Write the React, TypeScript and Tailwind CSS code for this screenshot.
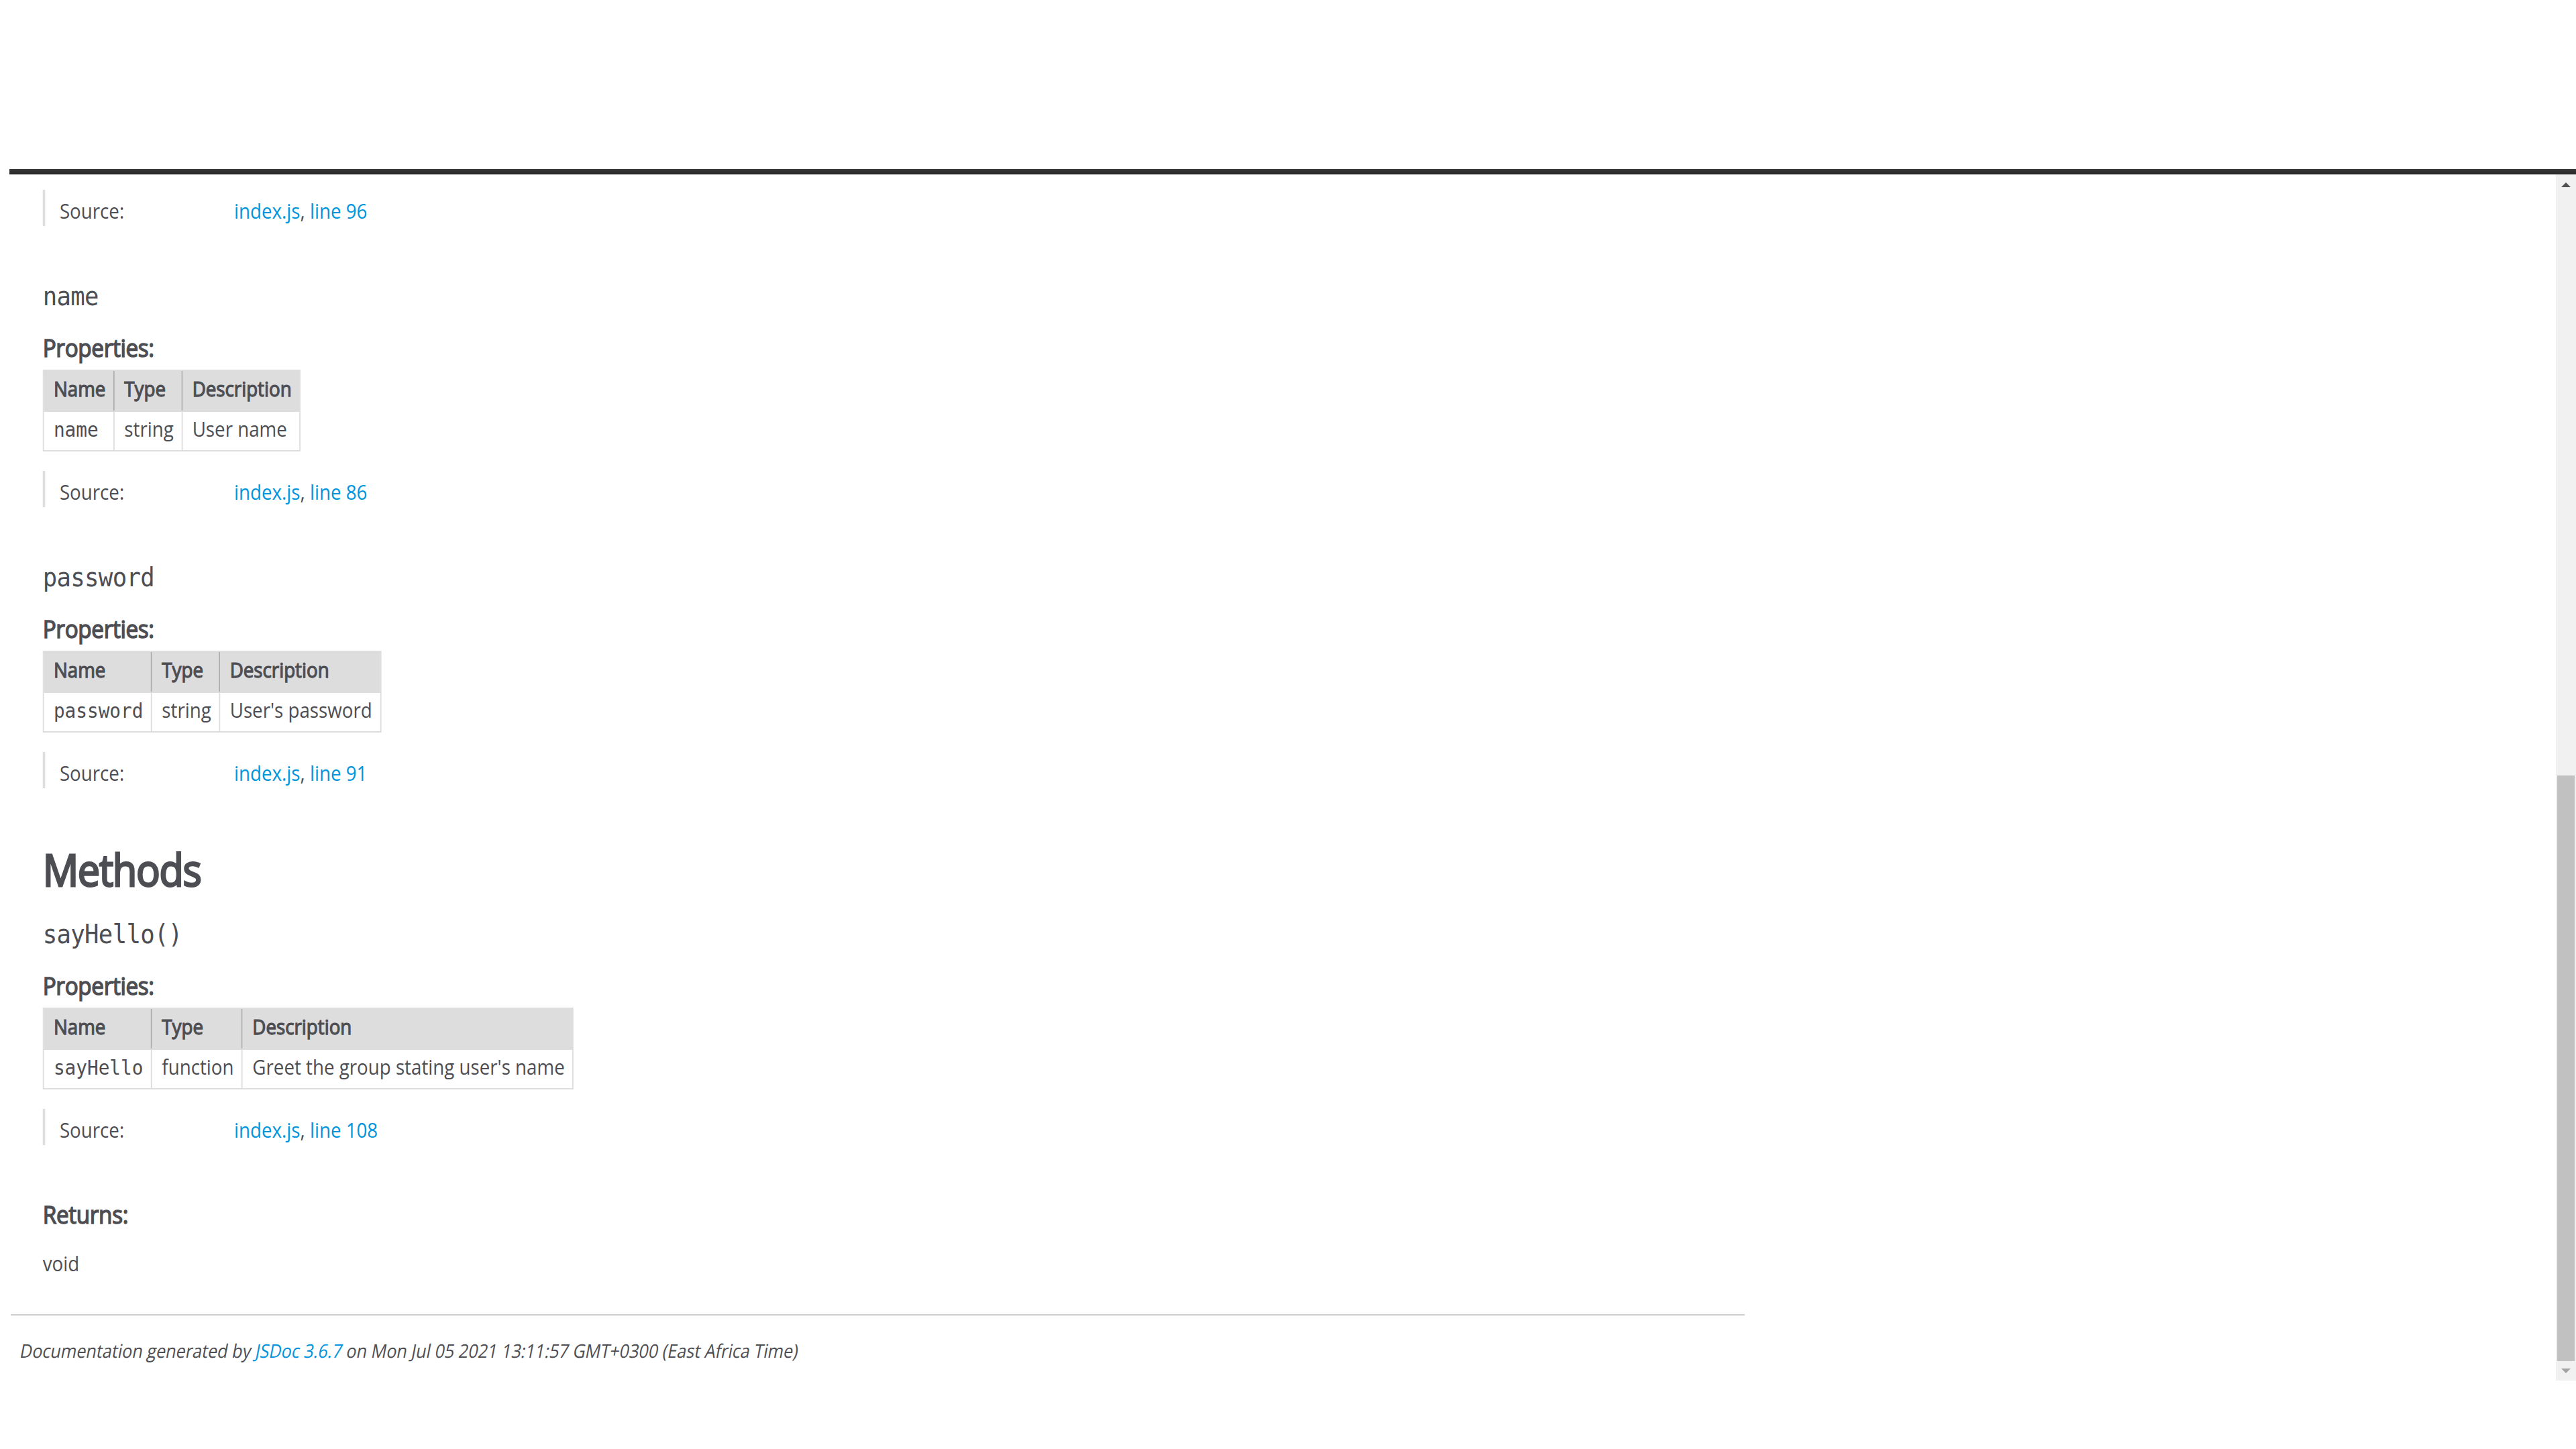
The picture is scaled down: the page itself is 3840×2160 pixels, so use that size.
import React from 'react';

// The capture is 2.2x with a 0.9 horizontal squeeze, so the page body is
// laid out at its natural size and narrowed with scale-x-90.
// The doc theme only ships Open Sans Regular: bold and italic are synthesized.

function SourceLine({ line }: { line: string }) {
  return (
    <div className="mt-[29px] flex w-full border-l-[4.4px] border-[#ddd] pt-[10px] pb-[2px] text-[30.8px] leading-[42px] first:mt-0">
      <span className="w-[313px] shrink-0 pl-[24px]">Source:</span>
      <span>
        <a className="text-[#0095dd]">index.js</a>, <a className="text-[#0095dd]">line {line}</a>
      </span>
    </div>
  );
}

function MemberName({ children, className = 'mt-[80px]' }: { children: React.ReactNode; className?: string }) {
  return (
    <h4 className={`${className} font-['DejaVu_Sans_Mono',monospace] text-[39.6px] leading-[48px] tracking-[-0.73px] font-normal`}>
      {children}
    </h4>
  );
}

function SubTitle({ children, className = 'mt-[31px]' }: { children: React.ReactNode; className?: string }) {
  return (
    <h5 className={`${className} text-[36.96px] leading-[44px] font-normal tracking-[-0.37px] [-webkit-text-stroke:1.5px_#4d4e53]`}>
      {children}
    </h5>
  );
}

function PropsTable({ name, type, desc }: { name: string; type: string; desc: string }) {
  const head = 'bg-[#ddd] [-webkit-text-stroke:1.25px_#4d4e53] pt-[5px] pb-[12px] pl-[16px] pr-[13px]';
  const cell = 'border-t-2 border-[#ddd] pt-[4px] pb-[10px] pl-[16px] pr-[13px]';
  return (
    <div className="mt-[11px] inline-grid grid-cols-[repeat(3,auto)] border-2 border-[#ddd] text-[30.8px] leading-[42px]">
      <div className={`${head} border-r-2 border-r-[#aaa]`}>Name</div>
      <div className={`${head} border-r-2 border-r-[#aaa]`}>Type</div>
      <div className={head}>Description</div>
      <div className={`${cell} border-r-2 font-['DejaVu_Sans_Mono',monospace] pt-[5px] pb-[9px]`}>{name}</div>
      <div className={`${cell} border-r-2`}>{type}</div>
      <div className={cell}>{desc}</div>
    </div>
  );
}

function Scrollbar() {
  return (
    <div className="flex w-[30px] shrink-0 flex-col bg-[#f1f1f1]">
      <div className="flex h-[30px] items-center justify-center">
        <svg width="14" height="7" viewBox="0 0 14 7">
          <polygon points="7,0 14,7 0,7" fill="#505050" />
        </svg>
      </div>
      <div className="flex flex-1 flex-col px-[2px] pt-[866px]">
        <div className="h-[873px] bg-[#c1c1c1]" />
      </div>
      <div className="flex h-[29px] items-center justify-center">
        <svg width="14" height="7" viewBox="0 0 14 7">
          <polygon points="0,0 14,0 7,7" fill="#a3a3a3" />
        </svg>
      </div>
    </div>
  );
}

export default function App() {
  return (
    <div className="flex h-[2160px] w-[3840px] flex-col overflow-hidden bg-white font-['Open_Sans',sans-serif] text-[#4d4e53]">
      <div className="h-[252px] shrink-0" />
      <div className="ml-[14px] h-[8px] shrink-0 bg-gradient-to-b from-[#3a3a3a] to-[#262626]" />
      <div className="flex h-[1798px] shrink-0">
        <main className="min-w-0 flex-1 overflow-hidden pl-[16px] pt-[23px]">
          <div className="w-[3300px] origin-top-left scale-x-90">
            <section className="flex w-[2872px] flex-col items-start border-b-2 border-[#ccc] pb-[55px] pl-[53px]">
              <SourceLine line="96" />

              <MemberName>name</MemberName>
              <SubTitle>Properties:</SubTitle>
              <PropsTable name="name" type="string" desc="User name" />
              <SourceLine line="86" />

              <MemberName>password</MemberName>
              <SubTitle>Properties:</SubTitle>
              <PropsTable name="password" type="string" desc="User's password" />
              <SourceLine line="91" />

              <h3 className="mt-[80px] text-[66px] leading-[80px] font-normal tracking-[-1.4px] [-webkit-text-stroke:2.9px_#4d4e53]">
                Methods
              </h3>
              <MemberName className="mt-[33px]">sayHello()</MemberName>
              <SubTitle>Properties:</SubTitle>
              <PropsTable name="sayHello" type="function" desc="Greet the group stating user's name" />
              <SourceLine line="108" />

              <SubTitle className="mt-[81px]">Returns:</SubTitle>
              <div className="mt-[30px] text-[30.8px] leading-[42px]">void</div>
            </section>
            <footer className="pl-[14px] pt-[32px] text-[28px] leading-[40px]">
              <p className="origin-[0_31px] -skew-x-12">
                Documentation generated by <a className="text-[#0095dd]">JSDoc 3.6.7</a> on Mon Jul 05 2021 13:11:57
                GMT+0300 (East Africa Time)
              </p>
            </footer>
          </div>
        </main>
        <Scrollbar />
      </div>
    </div>
  );
}
